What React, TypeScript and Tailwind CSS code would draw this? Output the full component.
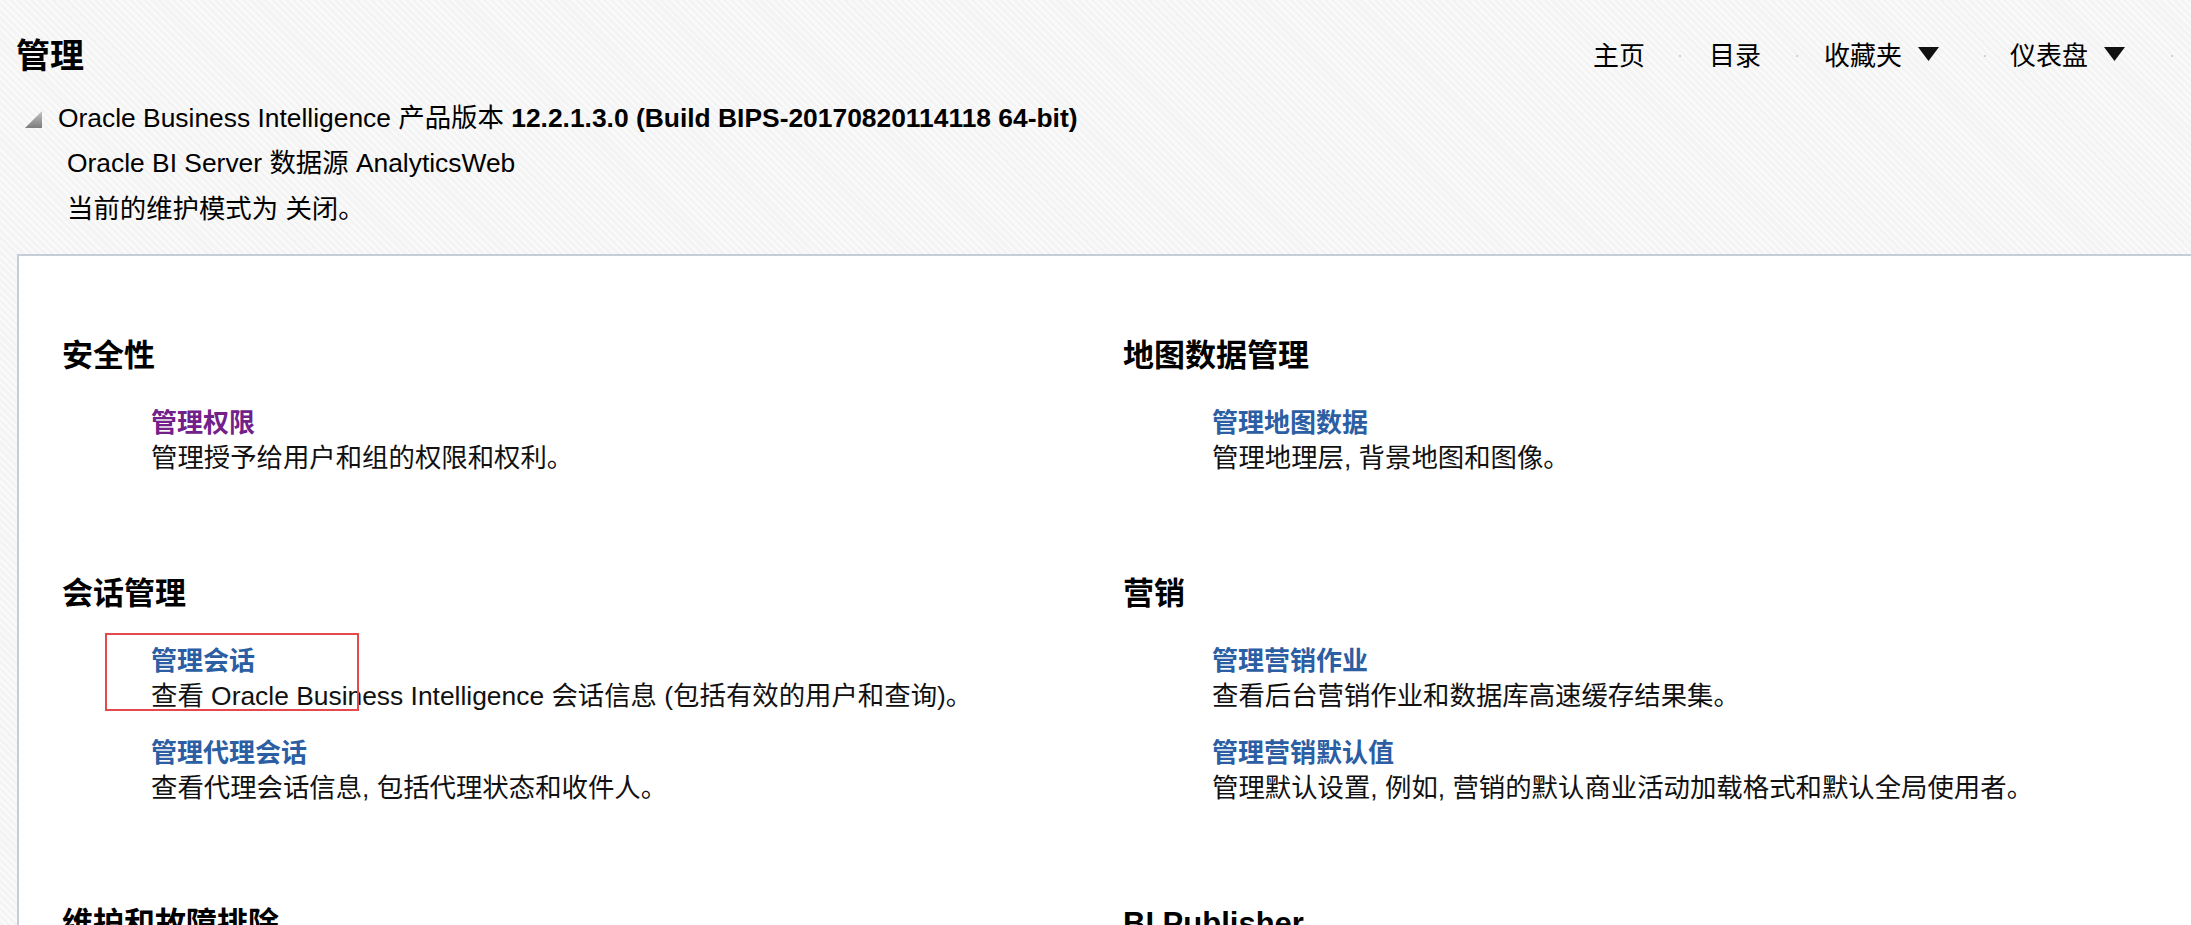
import React from "react";

function Dot({ className }: { className: string }) {
  return <span className={`inline-block h-[2px] w-[2px] bg-[#d2d2d2] ${className}`} />;
}

function Caret() {
  return (
    <svg width="21" height="14" viewBox="0 0 21 14" className="ml-[16px] -mt-[4px]">
      <polygon points="0,0 21,0 10.5,14" fill="#111" />
    </svg>
  );
}

type Item = { title: string; desc: string; visited?: boolean };
type Section = { heading: string; items: Item[] };

const left: Section[] = [
  { heading: "安全性", items: [{ title: "管理权限", desc: "管理授予给用户和组的权限和权利。", visited: true }] },
  {
    heading: "会话管理",
    items: [
      { title: "管理会话", desc: "查看 Oracle Business Intelligence 会话信息 (包括有效的用户和查询)。" },
      { title: "管理代理会话", desc: "查看代理会话信息, 包括代理状态和收件人。" },
    ],
  },
  { heading: "维护和故障排除", items: [] },
];

const right: Section[] = [
  { heading: "地图数据管理", items: [{ title: "管理地图数据", desc: "管理地理层, 背景地图和图像。" }] },
  {
    heading: "营销",
    items: [
      { title: "管理营销作业", desc: "查看后台营销作业和数据库高速缓存结果集。" },
      { title: "管理营销默认值", desc: "管理默认设置, 例如, 营销的默认商业活动加载格式和默认全局使用者。" },
    ],
  },
  { heading: "BI Publisher", items: [] },
];

function SectionBlock({ s }: { s: Section }) {
  return (
    <div className="flex flex-col">
      <h2 className="text-[31px] font-bold leading-[40px] text-black">{s.heading}</h2>
      {s.items.length > 0 && (
        <div className="mt-[30px] flex flex-col gap-[22px] pl-[89px]">
          {s.items.map((it) => (
            <div key={it.title} className="flex flex-col">
              <a
                className={`text-[26px] font-bold leading-[35px] ${
                  it.visited ? "text-[#72208a]" : "text-[#2c5ea3]"
                }`}
              >
                {it.title}
              </a>
              <p className="text-[26.4px] leading-[35px] text-[#111]">{it.desc}</p>
            </div>
          ))}
        </div>
      )}
    </div>
  );
}

export default function App() {
  const rows = [0, 1, 2];
  return (
    <div className="relative flex h-[925px] w-[2191px] flex-col overflow-hidden bg-[repeating-linear-gradient(45deg,#f4f4f4_0px,#f4f4f4_3px,#fafafa_3px,#fafafa_5px)] font-[family-name:'Liberation_Sans','Noto_Sans_CJK_SC',sans-serif] text-black">
      <div className="h-[3px] bg-[#f0f0f0]" />
      <div className="h-[6px] bg-gradient-to-b from-[#e2e2e2] to-[#f3f3f3]" />

      {/* header */}
      <div className="flex flex-col pt-[36px] pb-[21px]">
        <div className="flex h-[40px] items-center">
          <h1 className="flex-1 pl-[16px] text-[34px] font-bold leading-[40px]">管理</h1>
          <nav className="flex items-center pr-[18px] text-[26px] leading-[40px]">
            <span>主页</span>
            <Dot className="ml-[34px] mr-[28px]" />
            <span>目录</span>
            <Dot className="ml-[35px] mr-[26px]" />
            <span className="flex items-center">
              收藏夹
              <Caret />
            </span>
            <Dot className="ml-[45px] mr-[24px]" />
            <span className="flex items-center">
              仪表盘
              <Caret />
            </span>
            <Dot className="ml-[46px]" />
          </nav>
        </div>
        <div className="mt-[21px] flex flex-col text-[26.4px]">
          <div className="flex h-[44px] items-center pl-[25px]">
            <svg width="17" height="17" viewBox="0 0 17 17">
              <defs>
                <linearGradient id="tri" x1="0" y1="0" x2="0" y2="1">
                  <stop offset="0" stopColor="#c4c4c4" />
                  <stop offset="1" stopColor="#7d7d7d" />
                </linearGradient>
              </defs>
              <polygon points="17,0 17,17 0,17" fill="url(#tri)" />
            </svg>
            <span className="ml-[16px]">
              Oracle Business Intelligence 产品版本{" "}
              <b className="font-bold">12.2.1.3.0 (Build BIPS-20170820114118 64-bit)</b>
            </span>
          </div>
          <div className="flex h-[46px] items-center pl-[67px]">Oracle BI Server 数据源 AnalyticsWeb</div>
          <div className="flex h-[46px] items-center pl-[67px]">当前的维护模式为 关闭。</div>
        </div>
      </div>

      {/* content panel */}
      <div className="ml-[17px] flex-1 border-l-2 border-t-2 border-[#c5cdd9] bg-white pl-[43px] pt-[80px]">
        <div className="grid grid-cols-[1061px_1061px] gap-y-[98px]">
          {rows.map((r) => (
            <React.Fragment key={r}>
              <SectionBlock s={left[r]} />
              <SectionBlock s={right[r]} />
            </React.Fragment>
          ))}
        </div>
      </div>

      {/* annotation box */}
      <div className="absolute left-[105px] top-[633px] h-[78px] w-[254px] border-2 border-[#e5484d]" />
    </div>
  );
}
